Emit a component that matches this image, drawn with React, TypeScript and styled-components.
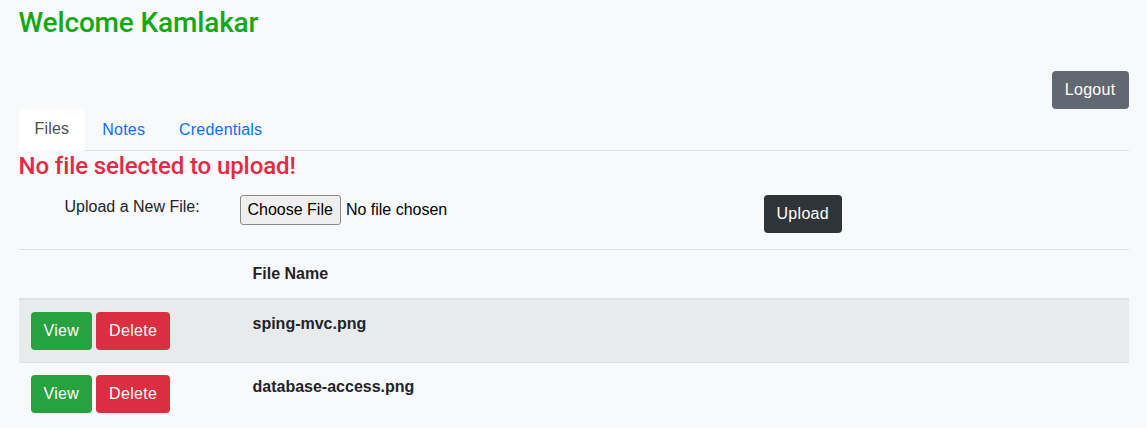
import React from 'react'
import styled, { createGlobalStyle } from 'styled-components'

const GlobalStyle = createGlobalStyle`
  html, body {
    margin: 0;
    padding: 0;
    background: #f8f9fa;
  }

  body {
    font: 16px/1.5 "Liberation Sans", Arial, sans-serif;
    color: #212529;
  }

  * {
    box-sizing: border-box;
  }
`

const Container = styled.div`
  max-width: 1140px;
  margin: 0 auto;
  padding: 6px 15px 0;
`

const Welcome = styled.h1`
  margin: 0;
  font: 500 28px/1.2 Roboto, "Liberation Sans", Arial, sans-serif;
  letter-spacing: -0.15px;
  color: #15a815;
`

const TopBar = styled.div`
  display: flex;
  justify-content: flex-end;
  margin-top: 31px;
`

const Button = styled.button<{ $tone: 'secondary' | 'dark' | 'success' | 'danger' }>`
  display: inline-block;
  padding: 6px 12px;
  border: 1px solid transparent;
  border-radius: 4px;
  font: 16px/24px "Liberation Sans", Arial, sans-serif;
  letter-spacing: 0.3px;
  color: #fff;
  cursor: pointer;
  background: ${p =>
    p.$tone === 'secondary' ? '#626871'
      : p.$tone === 'dark' ? '#2f3438'
      : p.$tone === 'success' ? '#28a141'
      : '#d92f40'};
`

const Tabs = styled.ul`
  display: flex;
  list-style: none;
  margin: 0;
  padding: 0;
  border-bottom: 1px solid #dee2e6;
`

const Tab = styled.li<{ $active?: boolean }>`
  margin-bottom: -1px;
  padding: 8px 16px;
  border: 1px solid ${p => (p.$active ? '#dee2e6 #dee2e6 #fff' : 'transparent')};
  border-radius: 4px 4px 0 0;
  background: ${p => (p.$active ? '#fff' : 'transparent')};
  color: ${p => (p.$active ? '#495057' : '#0d6efd')};
  line-height: 24px;
  letter-spacing: 0.2px;
  cursor: pointer;
`

const Alert = styled.h4`
  margin: 1px 0 0;
  font: 500 24px/1.2 Roboto, "Liberation Sans", Arial, sans-serif;
  letter-spacing: -0.1px;
  color: #e22a45;
`

const UploadRow = styled.div`
  display: grid;
  grid-template-columns: 221px 524px auto;
  align-items: start;
  margin-top: 15px;
`

const UploadLabel = styled.label`
  padding-left: 46px;
  line-height: 24px;
`

const FileInput = styled.input`
  font: 16px "Liberation Sans", Arial, sans-serif;
  color: #000;

  &::file-selector-button {
    font: 16px/18px "Liberation Sans", Arial, sans-serif;
    margin-right: 5px;
    padding: 5px 7px;
    border: 1px solid #8a8a8a;
    border-radius: 3px;
    background: #efefef;
    color: #000;
  }
`

const Table = styled.table`
  width: 100%;
  margin-top: 16px;
  border-collapse: collapse;

  th, td {
    padding: 12px;
    text-align: left;
    vertical-align: top;
    border-top: 1px solid #dee2e6;
    line-height: 24px;
  }

  thead th {
    border-bottom: 2px solid #dee2e6;
    font-weight: 700;
  }

  tbody tr:nth-child(odd) {
    background: rgba(0, 0, 0, 0.06);
  }
`

const ActionCell = styled.td`
  width: 222px;

  button + button {
    margin-left: 4px;
  }
`

const files = ['sping-mvc.png', 'database-access.png']

export default function App() {
  return (
    <>
      <GlobalStyle />
      <Container>
        <Welcome>Welcome Kamlakar</Welcome>
        <TopBar>
          <Button $tone="secondary">Logout</Button>
        </TopBar>
        <Tabs>
          <Tab $active>Files</Tab>
          <Tab>Notes</Tab>
          <Tab>Credentials</Tab>
        </Tabs>
        <Alert>No file selected to upload!</Alert>
        <UploadRow>
          <UploadLabel htmlFor="fileUpload">Upload a New File:</UploadLabel>
          <div>
            <FileInput type="file" id="fileUpload" name="fileUpload" />
          </div>
          <div>
            <Button $tone="dark">Upload</Button>
          </div>
        </UploadRow>
        <Table>
          <thead>
            <tr>
              <th></th>
              <th>File Name</th>
            </tr>
          </thead>
          <tbody>
            {files.map(name => (
              <tr key={name}>
                <ActionCell>
                  <Button $tone="success">View</Button>
                  <Button $tone="danger">Delete</Button>
                </ActionCell>
                <th>{name}</th>
              </tr>
            ))}
          </tbody>
        </Table>
      </Container>
    </>
  )
}
